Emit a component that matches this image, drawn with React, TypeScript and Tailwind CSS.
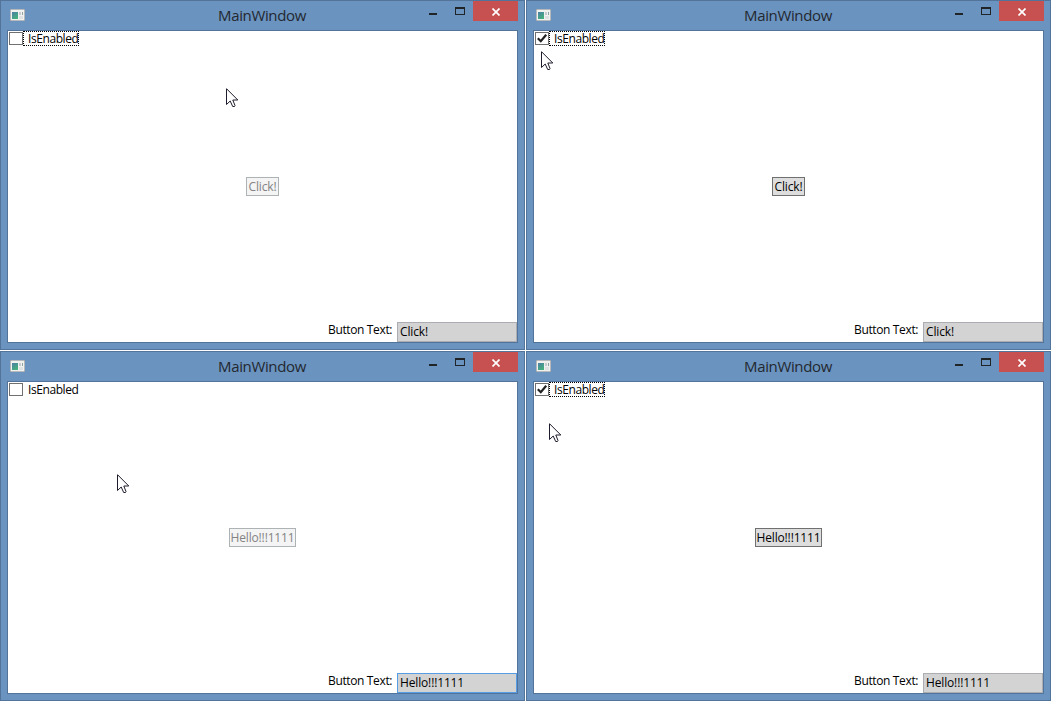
type WindowProps = {
  checked: boolean;
  focusRing: boolean;
  text: string;
  inputFocused?: boolean;
  wide?: boolean;
  cursor: string;
};

function AppIcon() {
  return (
    <svg width="16" height="13" viewBox="0 0 16 13" className="mt-[7px] ml-2 shrink-0">
      <defs>
        <linearGradient id="pane" x1="0" y1="0" x2="0.6" y2="1">
          <stop offset="0" stopColor="#4d7fa6" />
          <stop offset="1" stopColor="#45b07c" />
        </linearGradient>
      </defs>
      <rect x="1" y="1" width="15" height="12" fill="#8f9599" />
      <rect x="1.6" y="1.6" width="13.8" height="10.8" fill="#f1f1f0" />
      <rect x="3" y="4" width="6" height="7" fill="url(#pane)" />
      <rect x="10" y="4" width="2" height="3" fill="#c6cccf" />
      <rect x="10" y="8" width="4" height="3" fill="#dfe1e2" />
      <rect x="13" y="4" width="1" height="3" fill="#8fa5a4" />
    </svg>
  );
}

function Cursor({ className }: { className: string }) {
  return (
    <svg width="13" height="20" viewBox="0 0 13 20" className={"absolute " + className}>
      <path d="M.5 .7V16.5L4.2 13L6.7 18.5H8.5L9 17.5L6.8 12H11.8Z" fill="white" stroke="#1c1c2c" strokeWidth="1" />
    </svg>
  );
}

function MainWindow({ checked, focusRing, text, inputFocused, wide, cursor }: WindowProps) {
  return (
    <section className="relative flex h-[350px] w-[525px] flex-col border border-[#52749b] bg-[#6a93bf]">
      <header className="flex h-[29px] shrink-0">
        <AppIcon />
        <h1 className="ml-[193px] w-[90px] whitespace-nowrap pt-[3px] text-[15px] leading-[22px] tracking-[-0.35px] text-[#232830]">
          MainWindow
        </h1>
        <div className="ml-auto flex">
          <svg width="48" height="20" viewBox="0 0 48 20" shapeRendering="crispEdges">
            <path d="M4 12h8v2H4z" fill="#202427" />
            <path d="M30 6h10v8H30zM31 8v5h8V8z" fill="#202427" fillRule="evenodd" />
          </svg>
          <button aria-label="Close" className="mr-[6px] flex h-5 w-[45px] items-center justify-center bg-[#c75050]">
            <svg width="8" height="8" viewBox="0 0 8 8" className="mt-px">
              <path d="M.5 .5L7.5 7.5M7.5 .5L.5 7.5" stroke="white" strokeWidth="1.7" />
            </svg>
          </button>
        </div>
      </header>
      <main className="mx-[6px] flex h-[313px] shrink-0 flex-col border border-[#52749b] bg-white text-[12px] leading-4 text-black">
        <label className="flex h-[15px] items-start pl-px">
          <span className="mt-px flex h-[13px] w-[14px] shrink-0 items-center justify-center border border-[#707070] bg-white">
            {checked && (
              <svg width="12" height="11" viewBox="0 0 12 11" className="shrink-0">
                <path d="M1.8 5.2L4.8 8.2L10.2 1.8" fill="none" stroke="#212121" strokeWidth="2.2" />
              </svg>
            )}
          </span>
          <span className={"flex h-[15px] w-[56px] items-center border pl-1 " + (focusRing ? "border-dotted border-black" : "border-transparent")}>
            <span className="whitespace-nowrap tracking-[-0.42px]">IsEnabled</span>
          </span>
        </label>
        <div className="flex h-[276px] items-start justify-center pt-[131px]">
          <button
            disabled={!checked}
            className={
              "flex h-[19px] items-center justify-center whitespace-nowrap border tracking-[-0.15px] " +
              (wide ? "w-[67px] " : "w-[33px] ") +
              (checked ? "border-[#707070] bg-[#dddddd] text-black" : "border-[#adb2b5] bg-[#f4f4f4] text-[#838383]")
            }
          >
            {text}
          </button>
        </div>
        <div className="flex h-5 items-start justify-end">
          <span className="mr-[5px] w-16 whitespace-nowrap tracking-[-0.36px]">Button Text:</span>
          <div
            className={
              "flex h-5 w-[120px] items-center whitespace-nowrap border bg-[#d3d3d3] pl-0.5 tracking-[-0.15px] " +
              (inputFocused ? "border-[#569de5]" : "border-[#abadb3]")
            }
          >
            {text}
          </div>
        </div>
      </main>
      <Cursor className={cursor} />
    </section>
  );
}

export default function App() {
  return (
    <div className="grid h-[706px] w-[1053px] grid-cols-[525px_525px] grid-rows-[350px_350px] gap-px bg-white font-['Open_Sans',sans-serif]">
      <MainWindow checked={false} focusRing text="Click!" cursor="left-[225px] top-[87px]" />
      <MainWindow checked focusRing text="Click!" cursor="left-[14px] top-[50px]" />
      <MainWindow checked={false} focusRing={false} text="Hello!!!1111" wide inputFocused cursor="left-[116px] top-[122px]" />
      <MainWindow checked focusRing text="Hello!!!1111" wide cursor="left-[22px] top-[71px]" />
    </div>
  );
}
